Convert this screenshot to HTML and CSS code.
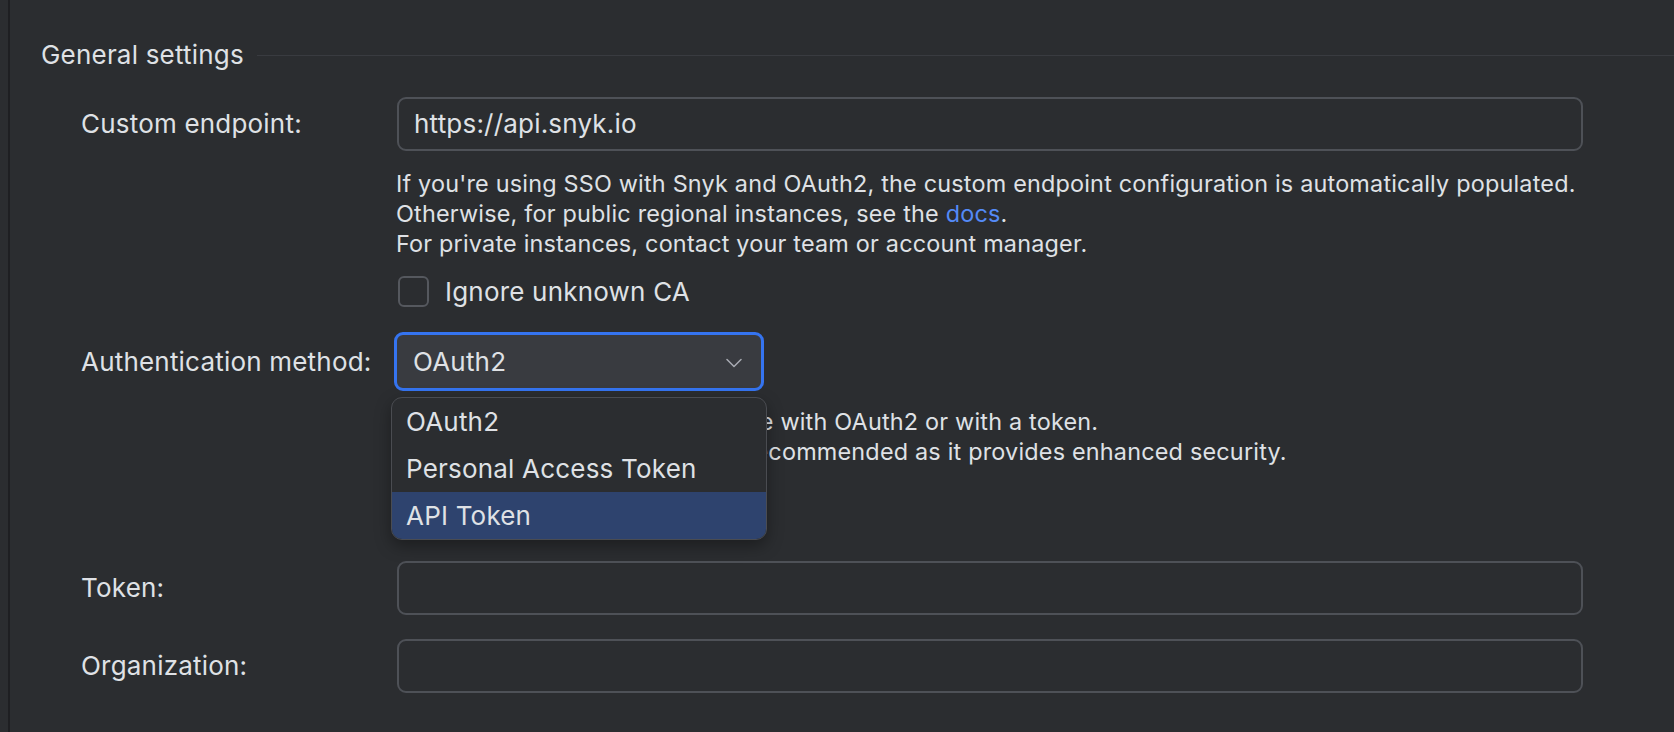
FILE: index.html
```html
<!DOCTYPE html>
<html lang="en">
<head>
<meta charset="utf-8">
<title>Snyk settings</title>
<link rel="stylesheet" href="styles.css">
</head>
<body>
<div class="panel">
  <div class="group-title">
    <span class="group-text">General settings</span>
    <div class="rule"></div>
  </div>
  <div class="form">
    <div class="row row-endpoint">
      <div class="label">Custom endpoint:</div>
      <div class="input">https://api.snyk.io</div>
    </div>
    <div class="comment comment-endpoint">
      If you're using SSO with Snyk and OAuth2, the custom endpoint configuration is automatically populated.<br>
      Otherwise, for public regional instances, see the <a class="link" href="#">docs</a>.<br>
      For private instances, contact your team or account manager.
    </div>
    <div class="check-row">
      <span class="checkbox"></span>
      <span class="check-text">Ignore unknown CA</span>
    </div>
    <div class="row row-auth">
      <div class="label">Authentication method:</div>
      <div class="combo-wrap">
        <div class="combo">
          <span class="combo-text">OAuth2</span>
          <svg class="chevron" width="16" height="10" viewBox="0 0 16 10"><polyline points="1,1.5 8,8.5 15,1.5" fill="none" stroke="#a8abb2" stroke-width="1.5" stroke-linecap="round" stroke-linejoin="round"/></svg>
        </div>
        <div class="popup">
          <div class="item">OAuth2</div>
          <div class="item">Personal Access Token</div>
          <div class="item selected">API Token</div>
        </div>
      </div>
    </div>
    <div class="comment comment-auth">
      Specifies whether to authenticate with OAuth2 or with a token.<br>
      Note: OAuth2 authentication is recommended as it provides enhanced security.
    </div>
    <div class="row row-token">
      <div class="label">Token:</div>
      <div class="input"></div>
    </div>
    <div class="row row-org">
      <div class="label">Organization:</div>
      <div class="input"></div>
    </div>
  </div>
</div>
</body>
</html>
```
FILE: styles.css
```css
* { box-sizing: border-box; }
html, body {
  margin: 0;
  padding: 0;
  background: #2b2d30;
}
body {
  padding-left: 8px;
  font-family: "Inter", "Noto Sans", sans-serif;
  color: #dfe1e5;
  overflow: hidden;
}
.panel {
  border-left: 2px solid #1e1f22;
  min-height: 100vh;
  padding-top: 39px;
  padding-left: 31px;
}
.group-title {
  display: flex;
  align-items: center;
  height: 32px;
}
.group-text {
  font-size: 26px;
  line-height: 32px;
  letter-spacing: 0.2px;
  white-space: nowrap;
}
.rule {
  flex: 1;
  height: 1px;
  margin-left: 13px;
  background: #393b40;
}
.form {
  padding-left: 40px;
}
.row {
  display: flex;
  align-items: center;
}
.label {
  width: 316px;
  flex: none;
  font-size: 26px;
  line-height: 32px;
  letter-spacing: 0.2px;
  white-space: nowrap;
}
.input {
  width: 1186px;
  height: 54px;
  border: 2px solid #4e5157;
  border-radius: 9px;
  padding-left: 15px;
  font-size: 26px;
  line-height: 50px;
  letter-spacing: 0.2px;
  white-space: nowrap;
}
.row-endpoint { margin-top: 26px; }
.comment {
  margin-left: 315px;
  font-size: 23.4px;
  line-height: 30px;
  letter-spacing: 0.2px;
  white-space: nowrap;
}
.comment-endpoint { margin-top: 18px; }
.link { color: #548af7; text-decoration: none; }
.check-row {
  margin-left: 317px;
  margin-top: 17px;
  display: flex;
  align-items: center;
  height: 31px;
}
.checkbox {
  width: 31px;
  height: 31px;
  border: 2px solid #55585e;
  border-radius: 6px;
  flex: none;
}
.check-text {
  margin-left: 16px;
  font-size: 26px;
  line-height: 31px;
  letter-spacing: 0.2px;
}
.row-auth { margin-top: 25px; }
.combo-wrap {
  position: relative;
  margin-left: -3px;
}
.combo {
  width: 370px;
  height: 59px;
  border: 3px solid #3574f0;
  border-radius: 9px;
  background: #393b40;
  display: flex;
  align-items: center;
  padding-left: 16px;
  padding-right: 19px;
}
.combo-text {
  flex: 1;
  font-size: 26px;
  line-height: 32px;
  letter-spacing: 0.2px;
}
.chevron { display: block; margin-top: 2px; }
.popup {
  position: absolute;
  left: -3px;
  top: 65px;
  width: 376px;
  border: 1px solid #4a4c51;
  border-radius: 11px;
  background: #2b2d30;
  overflow: hidden;
  box-shadow: 0 6px 16px rgba(0, 0, 0, 0.35);
  z-index: 5;
}
.item {
  height: 47px;
  padding-left: 14px;
  font-size: 26px;
  line-height: 47px;
  letter-spacing: 0.2px;
  white-space: nowrap;
}
.item.selected { background: #2e436e; }
.comment-auth { margin-top: 16px; }
.row-token { margin-top: 94px; }
.row-org { margin-top: 24px; }
```
